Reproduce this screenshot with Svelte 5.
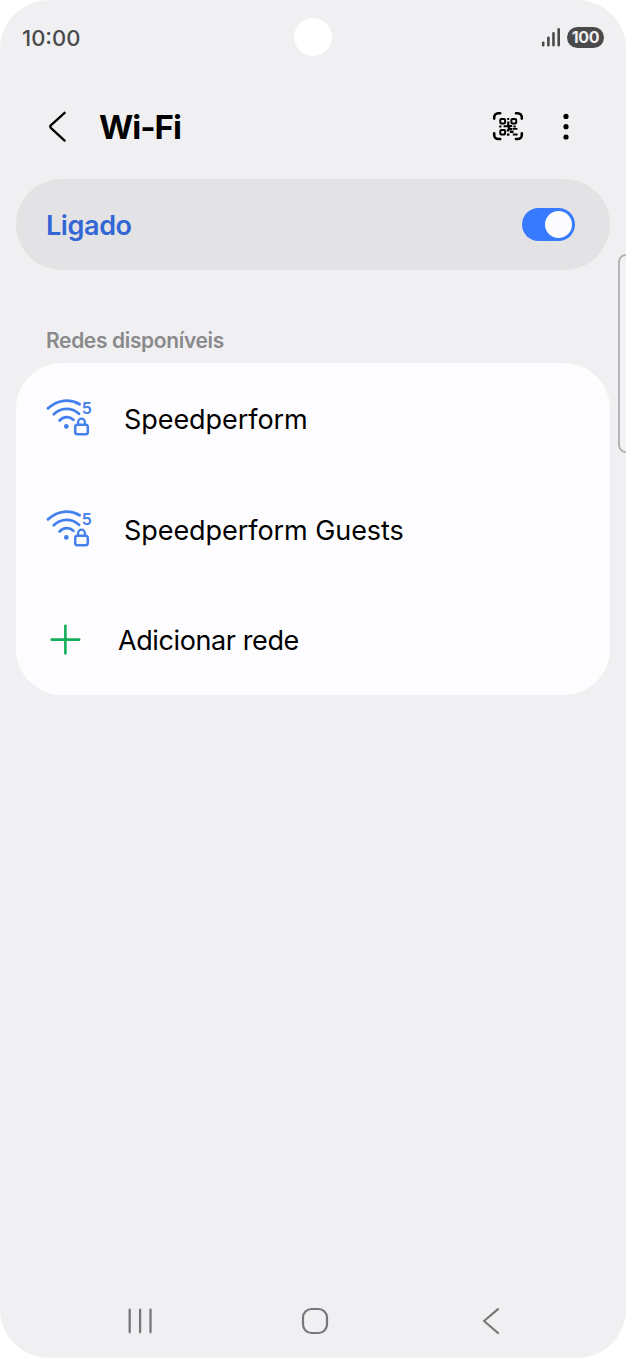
<script>
  let enabled = true;

  const networks = [
    { id: 1, name: "Speedperform" },
    { id: 2, name: "Speedperform Guests" },
  ];

  function toggleWifi() {
    enabled = !enabled;
  }
</script>

<div class="screen">
  <div class="status-bar">
    <span class="clock">10:00</span>
    <span class="camera"></span>
    <div class="status-icons">
      <svg width="20" height="20" viewBox="0 0 20 20" stroke="#4a4a4c" stroke-width="2.6" stroke-linecap="round">
        <path d="M2.2 18.2v-2.4M7.4 18.2v-7.4M12.5 18.2v-12M17.7 18.2v-16" />
      </svg>
      <span class="battery">100</span>
    </div>
  </div>

  <header class="header">
    <button class="icon-button back" aria-label="Voltar">
      <svg width="18" height="32" viewBox="0 0 18 32" fill="none" stroke="#000" stroke-width="2.3" stroke-linecap="round" stroke-linejoin="round">
        <path d="M16.6 1.8 2.8 14.4q-1.2 1.2 0 2.4L16.6 29.6" />
      </svg>
    </button>
    <h1 class="title">Wi-Fi</h1>
    <button class="icon-button qr" aria-label="Código QR">
      <svg width="32" height="32" viewBox="0 0 32 32" fill="none" stroke="#000">
        <path stroke-width="2.6" stroke-linecap="round" d="M2.2 7.6V6.2a4 4 0 0 1 4-4H8.2M24 2.2h1.8a4 4 0 0 1 4 4v1.4M29.8 22.4v1.6a4 4 0 0 1-4 4h-1.8M8.2 28H6.2a4 4 0 0 1-4-4v-1.6" />
        <g stroke-width="2">
          <rect x="8.3" y="7.9" width="4.8" height="4.6" rx="1" />
          <rect x="19.4" y="7.9" width="4.8" height="4.6" rx="1" />
          <rect x="8.3" y="19" width="4.8" height="4.6" rx="1" />
        </g>
        <path stroke="none" fill="#000" d="M15.2 7h2v2h-2zM15.2 10.6h2.2v3.4h2.8v2h-2v2.2h-2.4v-2h-4.2v-2h3.6zM7.2 14.6h2.2v2H7.2zM21.4 14.4h2.3v2.2h-2.3zM17.4 16.9h2.6v2.2h-2.6zM20.5 16.9h5v1.9h-5zM14.8 18.2h2.6v2.2h-2.6zM17.9 19.6h3.6v2.4h-3.6zM15 22.5h2.4v2.2H15zM20.8 22.4h4.8v2.2h-4.8z" />
      </svg>
    </button>
    <button class="icon-button more" aria-label="Mais opções">
      <svg width="6" height="28" viewBox="0 0 6 28">
        <circle cx="3" cy="3.4" r="2.6" />
        <circle cx="3" cy="13.7" r="2.6" />
        <circle cx="3" cy="24" r="2.6" />
      </svg>
    </button>
  </header>

  <section class="switch-card">
    <span class="switch-label">{enabled ? "Ligado" : "Desligado"}</span>
    <button class="switch" class:on={enabled} aria-label="Wi-Fi" on:click={toggleWifi}>
      <span class="thumb"></span>
    </button>
  </section>

  <h2 class="section-title"><span>Redes disponíveis</span></h2>

  <ul class="list">
    {#each networks as network (network.id)}
      <li class="row">
        <svg width="48" height="40" viewBox="0 0 48 40" fill="none" stroke="#4480ec" stroke-width="2.8" stroke-linecap="round">
          <path d="M3 10.4C12.6 1.6 24.6 .4 34.6 6.2" />
          <path d="M8.8 16.2C16.2 9.4 26.4 9.2 34 15.8" />
          <path d="M14.6 22.4C18.8 18.2 24.4 18.2 28.4 21.8" />
          <circle cx="21.3" cy="28.4" r="2.4" fill="#4480ec" stroke="none" />
          <rect x="30.2" y="26.8" width="12.6" height="9.4" rx="2.3" stroke-width="2.5" />
          <path stroke-width="2.3" d="M33.1 26.2v-2.1a3.4 3.4 0 0 1 6.8 0v2.1" />
          <text class="band" x="36.7" y="16">5</text>
        </svg>
        <span class="name">{network.name}</span>
      </li>
    {/each}
    <li class="row add">
      <svg width="32" height="32" viewBox="0 0 32 32" stroke="#14ad59" stroke-width="2.6" stroke-linecap="round">
        <path d="M2.6 15.6h27.6M16.4 1.8v27.6" />
      </svg>
      <span class="name">Adicionar rede</span>
    </li>
  </ul>

  <div class="edge-handle"></div>

  <nav class="nav-bar">
    <svg width="26" height="28" viewBox="0 0 26 28" stroke="#77777a" stroke-width="2.3" stroke-linecap="round">
      <path d="M2.7 2.7v22.6M13.1 2.7v22.6M23.5 2.7v22.6" />
    </svg>
    <svg class="home" width="28" height="28" viewBox="0 0 28 28" fill="none" stroke="#77777a" stroke-width="2.2">
      <rect x="2" y="2" width="24" height="24" rx="8.5" />
    </svg>
    <svg width="18" height="28" viewBox="0 0 18 28" fill="none" stroke="#77777a" stroke-width="2.2" stroke-linecap="round" stroke-linejoin="round">
      <path d="M16 2.2 2 14l14 12" />
    </svg>
  </nav>
</div>

<style>
  :global(body) {
    background: #fff;
  }

  .screen {
    position: relative;
    display: flex;
    flex-direction: column;
    width: 626px;
    height: 1358px;
    box-sizing: border-box;
    border-radius: 49px;
    background: #f0f0f2;
    overflow: hidden;
    font-family: Inter, Roboto, sans-serif;
    color: #000;
  }

  svg {
    display: block;
    flex: none;
  }

  .status-bar {
    display: grid;
    grid-template-columns: 1fr 38px 1fr;
    align-items: center;
    height: 74px;
    padding: 0 22px;
  }

  .clock {
    padding-top: 1px;
    font-size: 22px;
    font-weight: 500;
    color: #4a4a4c;
  }

  .camera {
    width: 38px;
    height: 38px;
    border-radius: 50%;
    margin-bottom: 1px;
    background: #fff;
  }

  .status-icons {
    display: flex;
    justify-content: flex-end;
    align-items: center;
    gap: 6px;
  }

  .battery {
    width: 37px;
    height: 21px;
    border-radius: 11px;
    background: #4a4a4c;
    color: #f0f0f2;
    font-size: 16px;
    font-weight: 700;
    line-height: 21px;
    letter-spacing: -0.3px;
    text-align: center;
  }

  .header {
    display: flex;
    align-items: center;
    height: 105px;
    padding: 0 57px 0 48px;
  }

  .icon-button {
    border: none;
    background: none;
    padding: 0;
    cursor: pointer;
  }

  .title {
    margin: 0 auto 0 33px;
    font-size: 33px;
    font-weight: 700;
    line-height: 40px;
    letter-spacing: -1px;
  }

  .more {
    margin-left: 39px;
  }

  .switch-card {
    display: flex;
    justify-content: space-between;
    align-items: center;
    height: 91px;
    margin: 0 16px;
    padding: 0 35px 0 30px;
    box-sizing: border-box;
    border-radius: 46px;
    background: #e3e3e5;
  }

  .switch-label {
    padding-top: 2px;
    font-size: 27px;
    font-weight: 600;
    letter-spacing: -0.4px;
    color: #3266d5;
  }

  .switch {
    display: flex;
    width: 53px;
    height: 33px;
    padding: 3px;
    border: none;
    border-radius: 17px;
    background: #9a9a9e;
    cursor: pointer;
  }

  .switch.on {
    justify-content: flex-end;
    background: #387aff;
  }

  .thumb {
    width: 27px;
    height: 27px;
    border-radius: 50%;
    background: #fcfcfe;
  }

  .section-title {
    display: flex;
    align-items: flex-end;
    height: 93px;
    margin: 0;
    padding: 0 46px 9px;
    box-sizing: border-box;
    font-size: 21px;
    font-weight: 600;
    line-height: 26px;
    letter-spacing: -0.36px;
    color: #8a8a8c;
  }

  .list {
    margin: 0 16px;
    padding: 0;
    border-radius: 46px;
    background: #fdfdff;
    list-style: none;
  }

  .row {
    display: flex;
    align-items: center;
    height: 110.7px;
    padding-left: 29px;
  }

  .name {
    margin-left: 31px;
    padding-top: 3px;
    font-size: 27px;
    line-height: 34px;
    letter-spacing: -0.06px;
  }

  .add {
    padding-left: 33px;
  }

  .add .name {
    margin-left: 37px;
    letter-spacing: -0.4px;
  }

  .band {
    fill: #4480ec;
    stroke: none;
    font-size: 16px;
    font-weight: 600;
  }

  /* edge panel grip, partly off the right side of the screen */
  .edge-handle {
    position: absolute;
    top: 254px;
    right: -12px;
    width: 20px;
    height: 199px;
    box-sizing: border-box;
    border: 2px solid #b4b4b6;
    border-radius: 8px;
    background: #f3f3f5;
  }

  .nav-bar {
    display: flex;
    align-items: center;
    height: 74px;
    margin-top: auto;
    padding: 0 127px;
  }

  .home {
    margin: 0 153px 0 148px;
  }
</style>
